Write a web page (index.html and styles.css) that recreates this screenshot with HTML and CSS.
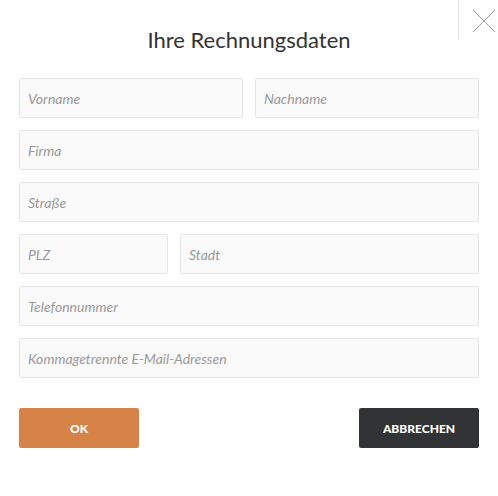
FILE: index.html
```html
<!DOCTYPE html>
<html lang="de">
<head>
<meta charset="utf-8">
<link rel="stylesheet" href="styles.css">
</head>
<body>
<div class="modal">
  <button class="close" aria-label="Schließen">
    <svg width="24" height="24" viewBox="0 0 24 24"><path d="M1 1L23 23M23 1L1 23" stroke="#9a9a9a" stroke-width="1" fill="none"/></svg>
  </button>
  <h1 class="title">Ihre Rechnungsdaten</h1>
  <form class="form">
    <div class="row half">
      <input class="field" placeholder="Vorname">
      <input class="field" placeholder="Nachname">
    </div>
    <div class="row"><input class="field" placeholder="Firma"></div>
    <div class="row"><input class="field" placeholder="Straße"></div>
    <div class="row city">
      <input class="field" placeholder="PLZ">
      <input class="field" placeholder="Stadt">
    </div>
    <div class="row"><input class="field" placeholder="Telefonnummer"></div>
    <div class="row"><input class="field" placeholder="Kommagetrennte E-Mail-Adressen"></div>
    <div class="actions">
      <button type="button" class="btn ok">OK</button>
      <button type="button" class="btn cancel">ABBRECHEN</button>
    </div>
  </form>
</div>
</body>
</html>
```
FILE: styles.css
```css
* { box-sizing: border-box; }
html, body { margin: 0; padding: 0; background: #fff; }
body { font-family: Lato, "Open Sans", sans-serif; color: #333; }
.modal { position: relative; width: 498px; height: 496px; padding: 0 19px; }
.close {
  position: absolute; top: 0; right: 0;
  width: 40px; height: 40px; padding: 0;
  border: none; border-left: 1px solid #e3e3e3; background: #fff;
  display: flex; align-items: center; justify-content: center;
}
.close svg { display: block; margin-left: 10px; margin-top: 1px; }
.title {
  margin: 0; padding-top: 27px; height: 78px;
  font-size: 22px; font-weight: 400; line-height: 26px;
  text-align: center; color: #333;
}
.form { display: flex; flex-direction: column; gap: 12px; }
.row { display: grid; grid-template-columns: 1fr; gap: 12px; }
.row.half { grid-template-columns: 1fr 1fr; }
.row.city { grid-template-columns: 149px 1fr; }
.field {
  height: 40px; width: 100%;
  border: 1px solid #e6e6e6; border-radius: 2px; background: #fafafa;
  padding: 0 8px; font-family: Lato, sans-serif; font-size: 14px; font-style: italic; color: #333;
}
.field::placeholder { color: #999; opacity: 1; }
.actions { display: flex; justify-content: space-between; margin-top: 18px; }
.btn {
  width: 120px; height: 40px; border: none; border-radius: 2px;
  font-family: Lato, sans-serif; font-weight: 900; font-size: 12px; color: #fff; letter-spacing: 0;
}
.ok { background: #d58346; }
.cancel { background: #323334; }
```
